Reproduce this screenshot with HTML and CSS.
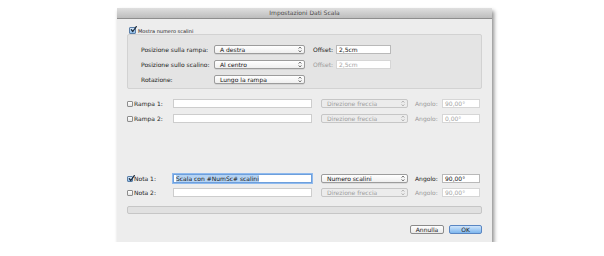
FILE: index.html
```html
<!DOCTYPE html>
<html lang="it">
<head>
  <meta charset="UTF-8" />
  <title>Impostazioni Dati Scala</title>
  <link rel="stylesheet" href="styles.css">
</head>
<body>
  <div class="desk">
    <div class="window">
      <div class="titlebar">Impostazioni Dati Scala</div>

      <div class="content">
        <!-- Mostra numero scalini -->
        <div class="check-row mini">
          <span class="cb on">
            <svg viewBox="0 0 8 8"><path d="M1.5 4.2 L3.2 6.3 L7.2 0.6" fill="none" stroke="#1d2a3a" stroke-width="1.4" stroke-linecap="round" stroke-linejoin="round"/></svg>
          </span>
          <span>Mostra numero scalini</span>
        </div>

        <div class="group">
          <div class="grow">
            <span class="glabel">Posizione sulla rampa:</span>
            <div class="popup wide"><span>A destra</span><svg class="arr" viewBox="0 0 4 7"><path d="M0.6 2.6 L2 1 L3.4 2.6 M0.6 4.4 L2 6 L3.4 4.4" fill="none" stroke="#555" stroke-width="0.8"/></svg></div>
            <span class="olabel">Offset:</span>
            <div class="field offset">2,5cm</div>
          </div>
          <div class="grow">
            <span class="glabel">Posizione sullo scalino:</span>
            <div class="popup wide"><span>Al centro</span><svg class="arr" viewBox="0 0 4 7"><path d="M0.6 2.6 L2 1 L3.4 2.6 M0.6 4.4 L2 6 L3.4 4.4" fill="none" stroke="#555" stroke-width="0.8"/></svg></div>
            <span class="olabel dim">Offset:</span>
            <div class="field offset dis">2,5cm</div>
          </div>
          <div class="grow">
            <span class="glabel">Rotazione:</span>
            <div class="popup wide"><span>Lungo la rampa</span><svg class="arr" viewBox="0 0 4 7"><path d="M0.6 2.6 L2 1 L3.4 2.6 M0.6 4.4 L2 6 L3.4 4.4" fill="none" stroke="#555" stroke-width="0.8"/></svg></div>
          </div>
        </div>

        <!-- Rampa labels -->
        <div class="lines rampe">
          <div class="line">
            <div class="check-row lab"><span class="cb"></span><span>Rampa 1:</span></div>
            <div class="field text"></div>
            <div class="popup narrow dis"><span>Direzione freccia</span><svg class="arr" viewBox="0 0 4 7"><path d="M0.6 2.6 L2 1 L3.4 2.6 M0.6 4.4 L2 6 L3.4 4.4" fill="none" stroke="#aaa" stroke-width="0.8"/></svg></div>
            <span class="alabel dim">Angolo:</span>
            <div class="field angle dis">90,00°</div>
          </div>
          <div class="line">
            <div class="check-row lab"><span class="cb"></span><span>Rampa 2:</span></div>
            <div class="field text"></div>
            <div class="popup narrow dis"><span>Direzione freccia</span><svg class="arr" viewBox="0 0 4 7"><path d="M0.6 2.6 L2 1 L3.4 2.6 M0.6 4.4 L2 6 L3.4 4.4" fill="none" stroke="#aaa" stroke-width="0.8"/></svg></div>
            <span class="alabel dim">Angolo:</span>
            <div class="field angle dis">0,00°</div>
          </div>
        </div>

        <!-- Note -->
        <div class="lines note">
          <div class="line">
            <div class="check-row lab">
              <span class="cb on">
                <svg viewBox="0 0 8 8"><path d="M1.5 4.2 L3.2 6.3 L7.2 0.6" fill="none" stroke="#1d2a3a" stroke-width="1.4" stroke-linecap="round" stroke-linejoin="round"/></svg>
              </span>
              <span>Nota 1:</span>
            </div>
            <div class="field text focus"><span class="sel">Scala con #NumSc# scalini</span></div>
            <div class="popup narrow"><span>Numero scalini</span><svg class="arr" viewBox="0 0 4 7"><path d="M0.6 2.6 L2 1 L3.4 2.6 M0.6 4.4 L2 6 L3.4 4.4" fill="none" stroke="#555" stroke-width="0.8"/></svg></div>
            <span class="alabel">Angolo:</span>
            <div class="field angle">90,00°</div>
          </div>
          <div class="line">
            <div class="check-row lab"><span class="cb"></span><span>Nota 2:</span></div>
            <div class="field text"></div>
            <div class="popup narrow dis"><span>Direzione freccia</span><svg class="arr" viewBox="0 0 4 7"><path d="M0.6 2.6 L2 1 L3.4 2.6 M0.6 4.4 L2 6 L3.4 4.4" fill="none" stroke="#aaa" stroke-width="0.8"/></svg></div>
            <span class="alabel dim">Angolo:</span>
            <div class="field angle dis">90,00°</div>
          </div>
        </div>

        <div class="bar"></div>

        <div class="buttons">
          <div class="btn">Annulla</div>
          <div class="btn ok">OK</div>
        </div>
      </div>
    </div>
  </div>
</body>
</html>
```

FILE: styles.css
```css
* {
  margin: 0;
  padding: 0;
  box-sizing: border-box;
}
body {
  background: #fff;
  font-family: "DejaVu Sans", sans-serif;
  font-size: 6px;
  color: #222;
}

/* Desktop and dialog window */
.desk {
  padding: 8px 0 0 117px;
}
.window {
  width: 375px;
  height: 234px;
  background: #ededed;
  box-shadow: 2px 3px 4px rgba(0, 0, 0, 0.45);
  display: flex;
  flex-direction: column;
}
.titlebar {
  height: 11px;
  line-height: 10px;
  text-align: center;
  color: #4a4a4a;
  background: linear-gradient(#dfdfdf, #bdbdbd);
  border-bottom: 1px solid #8e8e8e;
}
.content {
  padding: 8px 10px 0 10px;
  display: flex;
  flex-direction: column;
}

/* Checkboxes */
.check-row {
  display: flex;
  align-items: center;
  height: 9px;
}
.check-row.mini {
  height: 7px;
  font-size: 5px;
  padding-left: 2px;
}
.cb {
  width: 6px;
  height: 6px;
  border: 1px solid #8d8d8d;
  border-radius: 1px;
  background: linear-gradient(#fff, #e6e6e6);
  margin-right: 2px;
  position: relative;
  flex: none;
}
.cb.on {
  background: linear-gradient(#d3e6f8, #8fbde9);
  border-color: #5b7fa8;
}
.cb svg {
  position: absolute;
  left: 0;
  top: -2px;
  width: 7px;
  height: 7px;
}
.mini .cb {
  width: 7px;
  height: 7px;
}

/* Group box */
.group {
  height: 55px;
  background: #e4e4e4;
  border: 1px solid #d2d2d2;
  border-radius: 2px;
  padding: 10px 0 0 13px;
  display: flex;
  flex-direction: column;
  gap: 6px;
}
.grow {
  display: flex;
  align-items: center;
  height: 9px;
}
.glabel {
  width: 73px;
}
.olabel {
  width: 23px;
  margin-left: 8px;
}
.dim {
  color: #9a9a9a;
}

/* Popups and fields */
.popup {
  height: 9px;
  display: flex;
  align-items: center;
  justify-content: space-between;
  padding: 0 2px 0 5px;
  background: linear-gradient(#ffffff, #efefef);
  border: 1px solid #9c9c9c;
  border-radius: 2px;
  box-shadow: 0 0.5px 0 rgba(0, 0, 0, 0.15);
  color: #111;
  white-space: nowrap;
}
.popup.wide {
  width: 91px;
}
.popup.narrow {
  width: 87px;
  margin-left: 9px;
}
.popup.dis {
  background: #ececec;
  border-color: #c6c6c6;
  box-shadow: none;
  color: #9d9d9d;
}
.arr {
  width: 4px;
  height: 7px;
}
.field {
  height: 9px;
  line-height: 7px;
  padding-left: 2px;
  background: #fff;
  border: 1px solid #b9b9b9;
  color: #111;
  white-space: nowrap;
  overflow: hidden;
}
.field.dis {
  border-color: #d6d6d6;
  color: #a3a3a3;
}
.field.offset {
  width: 55px;
}
.field.text {
  width: 139px;
  border-color: #cdcdcd;
}
.field.angle {
  width: 38px;
}
.field.focus {
  border-color: #6d9fdc;
  box-shadow: 0 0 0 1px #8fbaee;
}
.sel {
  background: #b5d3f3;
}

/* Rampa / Nota lines */
.lines {
  display: flex;
  flex-direction: column;
}
.rampe {
  margin-top: 10px;
  gap: 6px;
}
.note {
  margin-top: 51px;
  gap: 5px;
}
.line {
  display: flex;
  align-items: center;
  height: 9px;
}
.check-row.lab {
  width: 46px;
}
.lab .cb {
  margin-right: 1px;
}
.alabel {
  width: 27px;
  margin-left: 7px;
}

.bar {
  margin-top: 9px;
  height: 8px;
  background: #e1e1e1;
  border: 1px solid #c6c6c6;
  border-radius: 2px;
}

/* Buttons */
.buttons {
  margin-top: 11px;
  display: flex;
  justify-content: flex-end;
  gap: 5px;
}
.btn {
  height: 9px;
  width: 34px;
  line-height: 7px;
  text-align: center;
  border: 1px solid #8b8b8b;
  border-radius: 2px;
  background: linear-gradient(#ffffff, #e9e9e9);
  color: #222;
}
.btn.ok {
  width: 33px;
  border-color: #5a86c2;
  background: linear-gradient(#cfe5fb, #7db6ee);
}
```
